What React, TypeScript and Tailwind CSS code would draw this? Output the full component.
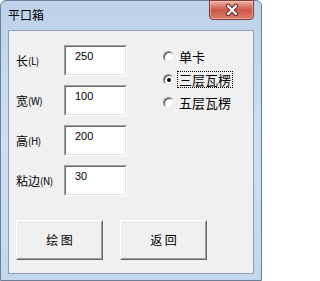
const cjk = { fontFamily: '"SimSun","Noto Sans CJK SC","Liberation Sans",sans-serif' };

function Field({ label, code, value }: { label: string; code: string; value: string }) {
  return (
    <div className="flex items-center h-[31px]">
      <div className="w-[48px] flex items-center text-[12px] text-black leading-none" style={cjk}>
        <span>{label}</span>
        <span className="text-[10px] tracking-[-0.5px]">({code})</span>
      </div>
      <div className="w-[63px] h-[31px] border-t border-l border-[#a0a0a0] border-r border-b border-r-white border-b-white">
        <div className="w-full h-full border-t border-l border-[#696969] border-r border-b border-r-[#e3e3e3] border-b-[#e3e3e3] bg-white pl-[9px] pt-[2px] text-[11px] font-['Liberation_Sans',sans-serif] text-black leading-[14px]">
          {value}
        </div>
      </div>
    </div>
  );
}

function Radio({ label, checked, focused }: { label: string; checked?: boolean; focused?: boolean }) {
  return (
    <div className="flex items-center h-[23px]">
      <div className="w-[11px] h-[11px] rounded-full border border-[#8e8e8e] border-r-[#e6e6e6] border-b-[#e6e6e6] bg-white flex items-center justify-center shadow-[inset_1px_1px_0_#555]">
        {checked && <div className="w-[4px] h-[4px] rounded-full bg-black" />}
      </div>
      <span
        className={`ml-[3px] px-[1px] text-[13px] leading-[15px] text-black border border-dotted ${focused ? "border-black" : "border-transparent"}`}
        style={cjk}
      >
        {label}
      </span>
    </div>
  );
}

function Btn({ label }: { label: string }) {
  return (
    <button className="w-[87px] h-[40px] border border-t-white border-l-white border-r-[#696969] border-b-[#696969] bg-[#f0f0f0]">
      <div className="w-full h-full border border-transparent border-r-[#a0a0a0] border-b-[#a0a0a0] flex items-center justify-center text-[12px] text-black" style={cjk}>
        {label}
      </div>
    </button>
  );
}

export default function App() {
  return (
    <div className="w-[262px] h-[281px] rounded-t-[6px] border border-[#6d7f96] bg-gradient-to-b from-[#bcd2ea] via-[#cfdff1] to-[#c3d7ec] flex flex-col">
      <div className="h-[29px] flex items-start relative">
        <span className="ml-[7px] mt-[7px] text-[12px] leading-[14px] text-black" style={cjk}>
          平口箱
        </span>
        <div className="absolute right-[7px] top-[-1px] w-[45px] h-[20px] rounded-b-[4px] border border-[#8a3a33] bg-gradient-to-b from-[#e9b0a6] via-[#cf5646] to-[#d8796a] flex items-center justify-center shadow-[inset_0_0_0_1px_rgba(255,255,255,0.35)]">
          <svg width="14" height="12" viewBox="0 0 14 12">
            <path d="M3 2 L11 10 M11 2 L3 10" stroke="#5a2420" strokeWidth="4.2" strokeLinecap="round" />
            <path d="M3 2 L11 10 M11 2 L3 10" stroke="#ffffff" strokeWidth="2.4" strokeLinecap="round" />
          </svg>
        </div>
      </div>
      <div className="mx-[7px] h-[244px] border border-[#8aa0bb] bg-[#f0f0f0] flex flex-col">
        <div className="flex pl-[7px] pt-[14px]">
          <div className="flex flex-col gap-[9px]">
            <Field label="长" code="L" value="250" />
            <Field label="宽" code="W" value="100" />
            <Field label="高" code="H" value="200" />
            <Field label="粘边" code="N" value="30" />
          </div>
          <div className="ml-[36px] flex flex-col">
            <Radio label="单卡" />
            <Radio label="三层瓦楞" checked focused />
            <Radio label="五层瓦楞" />
          </div>
        </div>
        <div className="flex gap-[17px] pl-[7px] mt-[24px]">
          <Btn label="绘 图" />
          <Btn label="返 回" />
        </div>
      </div>
    </div>
  );
}
